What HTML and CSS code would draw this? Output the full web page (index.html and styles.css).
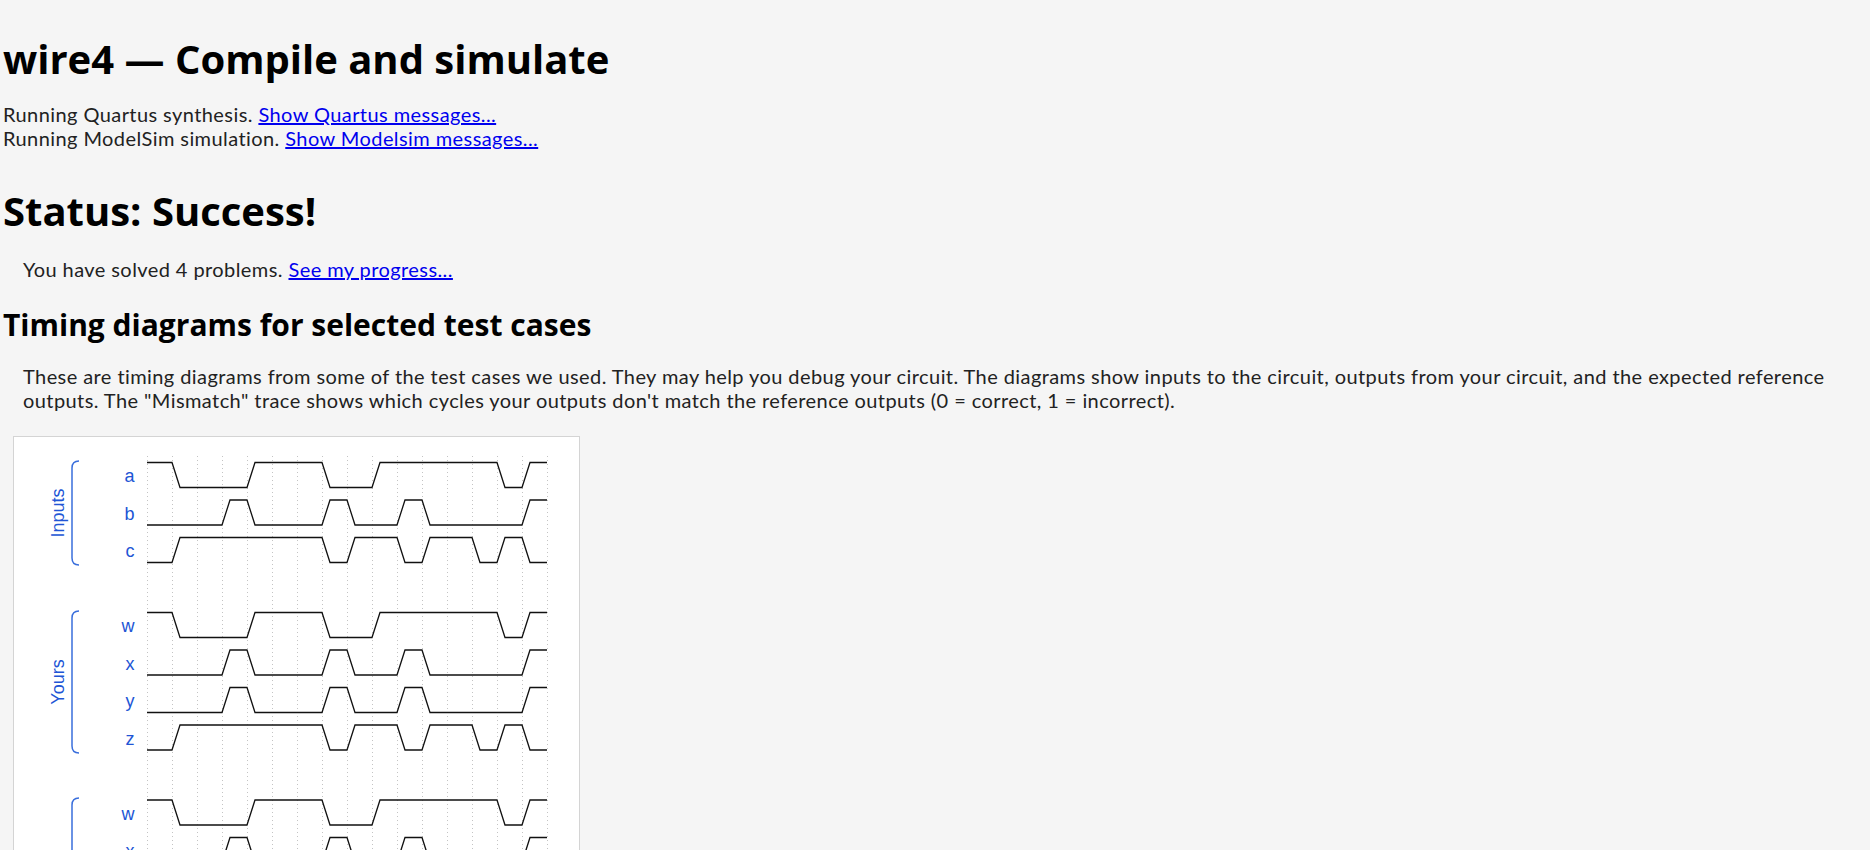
FILE: index.html
```html
<!DOCTYPE html>
<html lang="en">
<head>
<meta charset="utf-8">
<title>wire4 — Compile and simulate</title>
<link rel="stylesheet" href="styles.css">
</head>
<body>
<h1 class="title">wire4 — Compile and simulate</h1>
<div class="log">
  <div>Running Quartus synthesis. <a href="#">Show Quartus messages...</a></div>
  <div>Running ModelSim simulation. <a href="#">Show Modelsim messages...</a></div>
</div>
<h1 class="status">Status: Success!</h1>
<p class="solved">You have solved 4 problems. <a href="#">See my progress...</a></p>
<h2 class="section">Timing diagrams for selected test cases</h2>
<p class="intro">These are timing diagrams from some of the test cases we used. They may help you debug your circuit. The diagrams show inputs to the circuit, outputs from your circuit, and the expected reference outputs. The "Mismatch" trace shows which cycles your outputs don't match the reference outputs (0 = correct, 1 = incorrect).</p>
<div class="diagram">
  <svg class="wave" width="565" height="610" viewBox="0 0 565 610" xmlns="http://www.w3.org/2000/svg">
    <defs>
      <path id="sa" d="M133,0 H158 l8,25 H233 l8,-25 H308 l8,25 H358 l8,-25 H483 l8,25 H508 l8,-25 H533"/>
      <path id="sb" d="M133,25 H208 l8,-25 H233 l8,25 H308 l8,-25 H333 l8,25 H383 l8,-25 H408 l8,25 H508 l8,-25 H533"/>
      <path id="sc" d="M133,25 H158 l8,-25 H308 l8,25 H333 l8,-25 H383 l8,25 H408 l8,-25 H458 l8,25 H483 l8,-25 H508 l8,25 H533"/>
      <path id="s0" d="M133,25 H533"/>
    </defs>
    <g class="grid">
      <path d="M133.5,19 V605 M158.5,19 V605 M183.5,19 V605 M208.5,19 V605 M233.5,19 V605 M258.5,19 V605 M283.5,19 V605 M308.5,19 V605 M333.5,19 V605 M358.5,19 V605 M383.5,19 V605 M408.5,19 V605 M433.5,19 V605 M458.5,19 V605 M483.5,19 V605 M508.5,19 V605 M533.5,19 V605"/>
    </g>
    <g class="braces">
      <path d="M65,24 C60,24 58,26 58,31 V121 C58,126 60,128 65,128"/>
      <path d="M65,174 C60,174 58,176 58,181 V309 C58,314 60,316 65,316"/>
      <path d="M65,361 C60,361 58,363 58,368 V496 C58,501 60,503 65,503"/>
    </g>
    <g class="group-labels">
      <text transform="translate(50,76) rotate(-90)">Inputs</text>
      <text transform="translate(50,245) rotate(-90)">Yours</text>
      <text transform="translate(50,432) rotate(-90)">Ref</text>
    </g>
    <g class="labels">
      <text x="120.5" y="45">a</text>
      <text x="120.5" y="82.5">b</text>
      <text x="120.5" y="120">c</text>
      <text x="120.5" y="195">w</text>
      <text x="120.5" y="232.5">x</text>
      <text x="120.5" y="270">y</text>
      <text x="120.5" y="307.5">z</text>
      <text x="120.5" y="382.5">w</text>
      <text x="120.5" y="420">x</text>
      <text x="120.5" y="457.5">y</text>
      <text x="120.5" y="495">z</text>
      <text x="120.5" y="570">Mismatch</text>
    </g>
    <g class="signals">
      <use href="#sa" y="25.5"/>
      <use href="#sb" y="63"/>
      <use href="#sc" y="100.5"/>
      <use href="#sa" y="175.5"/>
      <use href="#sb" y="213"/>
      <use href="#sb" y="250.5"/>
      <use href="#sc" y="288"/>
      <use href="#sa" y="363"/>
      <use href="#sb" y="400.5"/>
      <use href="#sb" y="438"/>
      <use href="#sc" y="475.5"/>
      <use href="#s0" y="550.5"/>
    </g>
  </svg>
</div>
</body>
</html>
```

FILE: styles.css
```css
html, body {
  background: #f5f5f5;
}
body {
  margin: 0;
  padding: 0 0 40px 3px;
  color: #222;
  font-family: Lato, "Noto Sans", sans-serif;
  font-size: 20px;
  line-height: 24px;
  letter-spacing: 0.42px;
}
a {
  color: #0000ee;
}
.title, .status {
  font-family: "Open Sans", sans-serif;
  font-weight: 700;
  font-size: 40px;
  line-height: 54px;
  letter-spacing: 0;
  color: #000;
}
.title {
  margin: 32px 0 16px;
}
.log {
  margin: 0;
}
.status {
  margin: 34px 0 0;
}
.solved {
  margin: 19px 0 0 20px;
}
.section {
  font-family: "Open Sans", sans-serif;
  font-weight: 700;
  font-size: 30px;
  line-height: 40px;
  letter-spacing: 0;
  color: #000;
  margin: 24px 0 0;
}
.intro {
  margin: 19px 5px 0 20px;
}
.diagram {
  display: inline-block;
  margin: 24px 0 0 10px;
  background: #fff;
  border: 1px solid #d4d4d4;
  line-height: 0;
  letter-spacing: 0;
}
.wave {
  display: block;
}
.grid path {
  stroke: #c4c4c4;
  stroke-width: 1;
  stroke-dasharray: 1 3;
  fill: none;
}
.braces path {
  stroke: #3a6fdc;
  stroke-width: 1.5;
  fill: none;
}
.group-labels text {
  font-family: "Liberation Sans", Arial, sans-serif;
  font-size: 18px;
  fill: #2155d5;
  text-anchor: middle;
}
.labels text {
  font-family: "Liberation Sans", Arial, sans-serif;
  font-size: 18px;
  fill: #2155d5;
  text-anchor: end;
}
.signals use {
  stroke: #111;
  stroke-width: 1.3;
  fill: none;
}
```
